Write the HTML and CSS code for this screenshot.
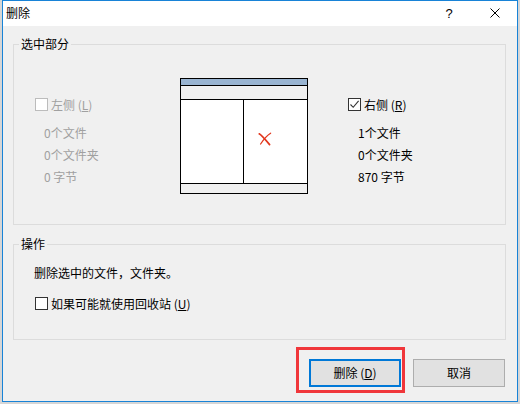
FILE: index.html
```html
<!DOCTYPE html>
<html lang="zh-CN">
<head>
<meta charset="utf-8">
<title>删除</title>
<link rel="stylesheet" href="styles.css">
</head>
<body>
<div class="window">
  <div class="titlebar">
    <span class="title">删除</span>
    <span class="tb-btn help">?</span>
    <span class="tb-btn close">
      <svg width="10" height="10" viewBox="0 0 10 10"><path d="M0.5 0.5 L9.5 9.5 M9.5 0.5 L0.5 9.5" stroke="#000" stroke-width="1" fill="none"/></svg>
    </span>
  </div>
  <div class="content">
    <fieldset class="group sel">
      <legend>选中部分</legend>
      <div class="sel-row">
        <div class="side left disabled">
          <div class="check"><span class="box"></span><span class="lbl">左侧 (<u>L</u>)</span></div>
          <ul class="stats">
            <li>0个文件</li>
            <li>0个文件夹</li>
            <li>0 字节</li>
          </ul>
        </div>
        <div class="diagram">
          <div class="d-title"></div>
          <div class="d-bar"></div>
          <div class="d-panes">
            <div class="d-pane d-left"></div>
            <div class="d-pane d-right">
              <svg class="xmark" width="14" height="14" viewBox="0 0 14 14"><path d="M1.2 1.8 C3 2.8 6 6 11.6 12.6" stroke="#e2361c" stroke-width="1.7" fill="none" stroke-linecap="round"/><path d="M12.6 1.2 C9 3.5 5.5 7.5 2.6 12" stroke="#e2361c" stroke-width="1.3" fill="none" stroke-linecap="round"/></svg>
            </div>
          </div>
          <div class="d-status"></div>
        </div>
        <div class="side right">
          <div class="check"><span class="box checked"><svg width="11" height="11" viewBox="0 0 11 11"><path d="M1.5 5.5 L4.2 8.3 L9.6 1.8" stroke="#333" stroke-width="1.1" fill="none"/></svg></span><span class="lbl">右侧 (<u>R</u>)</span></div>
          <ul class="stats">
            <li>1个文件</li>
            <li>0个文件夹</li>
            <li>870 字节</li>
          </ul>
        </div>
      </div>
    </fieldset>
    <fieldset class="group ops">
      <legend>操作</legend>
      <p class="desc">删除选中的文件，文件夹。</p>
      <div class="check ops-check"><span class="box"></span><span class="lbl">如果可能就使用回收站 (<u>U</u>)</span></div>
    </fieldset>
    <div class="buttons">
      <div class="btn-wrap">
        <button class="btn default">删除 (<u>D</u>)</button>
        <span class="highlight"></span>
      </div>
      <button class="btn">取消</button>
    </div>
  </div>
</div>
</body>
</html>
```
FILE: styles.css
```css
* { box-sizing: border-box; }
html, body { margin: 0; padding: 0; }
body {
  width: 520px;
  height: 404px;
  background: #d6d6d6;
  font-family: "Noto Sans CJK SC", "Microsoft YaHei", sans-serif;
  font-size: 12px;
  color: #000;
  overflow: hidden;
}
.window {
  margin-left: 2px;
  width: 516px;
  height: 402px;
  border: 1px solid #1883d7;
  background: #f0f0f0;
  display: flex;
  flex-direction: column;
}
.titlebar {
  height: 25px;
  background: #fff;
  display: flex;
  align-items: center;
  flex: none;
}
.title {
  flex: 1;
  padding-left: 3px;
  line-height: 16px;
  padding-bottom: 1px;
}
.tb-btn {
  width: 46px;
  height: 25px;
  display: flex;
  align-items: center;
  justify-content: center;
}
.help {
  font-family: "Liberation Sans", sans-serif;
  font-size: 13px;
  padding-left: 2px;
}
.close { padding-bottom: 2px; padding-left: 1px; }
.content {
  flex: 1;
  padding: 10px 11px 0 10px;
}
.group {
  margin: 0;
  padding: 0;
  border: 1px solid #dcdcdc;
  min-width: 0;
}
.group legend {
  padding: 0 2px;
  margin-left: 5px;
  line-height: 16px;
}
.sel { padding-bottom: 30px; }
.sel-row {
  display: flex;
  align-items: flex-start;
  padding-left: 21px;
}
.side { margin-top: 46px; }
.left { width: 145px; }
.right { margin-left: 40px; }
.check {
  display: flex;
  align-items: center;
  height: 13px;
  gap: 3px;
}
.box {
  width: 13px;
  height: 13px;
  border: 1px solid #333;
  background: #fff;
  display: flex;
  align-items: center;
  justify-content: center;
  flex: none;
}
.lbl { line-height: 16px; white-space: nowrap; }
.disabled { color: #a0a0a0; }
.disabled .box { border-color: #bcbcbc; }
.stats {
  list-style: none;
  margin: 11px 0 0;
  padding: 0 0 0 9px;
  line-height: 22px;
}
.right .stats { padding-left: 10px; }
.diagram {
  margin-top: 26px;
  width: 128px;
  height: 116px;
  border: 1px solid #000;
  display: flex;
  flex-direction: column;
  background: #f0f0f0;
}
.d-title { height: 7px; background: #99b4d1; border-bottom: 1px solid #000; }
.d-bar { height: 14px; border-bottom: 1px solid #000; }
.d-panes { height: 84px; border-bottom: 1px solid #000; display: flex; }
.d-pane { background: #fff; }
.d-left { width: 63px; border-right: 1px solid #000; }
.d-right { flex: 1; display: flex; justify-content: center; align-items: flex-start; padding-top: 32px; padding-right: 22px; }
.d-status { flex: 1; }
.ops { margin-top: 11px; padding-bottom: 29px; }
.desc {
  margin: 13px 0 0 20px;
  line-height: 16px;
}
.ops-check { margin-top: 16px; padding-left: 21px; }
.buttons {
  margin-top: 19px;
  display: flex;
  justify-content: flex-end;
  gap: 12px;
  padding-right: 1px;
}
.btn-wrap { position: relative; display: flex; }
.btn {
  width: 92px;
  height: 28px;
  margin: 0;
  padding: 0;
  background: #e1e1e1;
  border: 1px solid #adadad;
  font-family: inherit;
  font-size: 12px;
  color: #000;
  line-height: 16px;
}
.btn.default { border: 2px solid #0078d7; }
.highlight {
  position: absolute;
  left: -13px;
  top: -12px;
  width: 109px;
  height: 46px;
  border: 3px solid #f0363a;
  pointer-events: none;
}
```
